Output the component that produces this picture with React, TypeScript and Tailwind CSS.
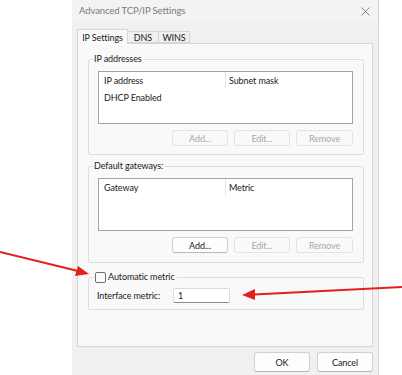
import React from "react";

const font = { fontFamily: 'Lato, "Noto Sans", sans-serif' };

function Btn({ label, disabled, className = "" }: { label: string; disabled?: boolean; className?: string }) {
  return (
    <div
      className={
        "flex items-center justify-center rounded-[3px] border text-[9px] leading-none " +
        (disabled
          ? "border-[#e3e3e3] bg-[#f9f9f9] text-[#a8a8a8] "
          : "border-[#d0d0d0] border-b-[#b8b8b8] bg-[#fdfdfd] text-[#1a1a1a] ") +
        className
      }
    >
      {label}
    </div>
  );
}

function ListView({ c1, c2, row }: { c1: string; c2: string; row?: string }) {
  return (
    <div className="ml-[9px] w-[255px] h-[53px] border border-[#a3a3a3] bg-white text-[9px] text-[#1a1a1a] leading-none">
      <div className="flex h-[17px] items-center">
        <div className="w-[127px] h-full flex items-center pl-[5px] border-r border-[#e5e5e5]">{c1}</div>
        <div className="pl-[3px]">{c2}</div>
      </div>
      {row && <div className="pl-[5px] pt-[4px]">{row}</div>}
    </div>
  );
}

function Group({ label, h, children, className = "" }: { label: React.ReactNode; h: string; children: React.ReactNode; className?: string }) {
  return (
    <div className={"relative ml-[10px] w-[276px] border border-[#dedede] rounded-[2px] " + h + " " + className}>
      <div className="absolute left-[5px] top-[-7px] bg-[#f9f9f9] pr-[2px] text-[9px] leading-[12px] text-[#1a1a1a]">{label}</div>
      {children}
    </div>
  );
}

export default function App() {
  return (
    <div className="relative w-[402px] h-[375px] bg-white overflow-hidden tracking-[-0.1px]" style={font}>
      <div className="ml-[72px] w-[307px] h-[375px] bg-[#f0f0f0] border-r border-[#d8d8d8] flex flex-col">
        {/* title bar */}
        <div className="h-[22px] flex items-center justify-between bg-[#f3f3f3] pl-[7px] pr-[8px]">
          <span className="text-[9.5px] text-[#7c7c7c]">Advanced TCP/IP Settings</span>
          <svg width="9" height="9" viewBox="0 0 9 9">
            <path d="M0.5 0.5 L8.5 8.5 M8.5 0.5 L0.5 8.5" stroke="#8a8a8a" strokeWidth="1" />
          </svg>
        </div>
        {/* tabs */}
        <div className="mt-[7px] ml-[5px] flex items-end h-[14px] text-[9px] leading-none text-[#1a1a1a]">
          <div className="h-[15px] w-[51px] mb-[-1px] relative z-10 flex items-center justify-center border border-b-0 border-[#d6d6d6] bg-[#f9f9f9]">IP Settings</div>
          <div className="h-[12px] w-[31px] flex items-center justify-center border border-l-0 border-[#d6d6d6] bg-[#f0f0f0]">DNS</div>
          <div className="h-[12px] w-[31px] flex items-center justify-center border border-l-0 border-[#d6d6d6] bg-[#f0f0f0]">WINS</div>
        </div>
        {/* panel */}
        <div className="ml-[5px] w-[296px] h-[304px] border border-[#d6d6d6] bg-[#f9f9f9] flex flex-col">
          <Group label="IP addresses" h="h-[96px]" className="mt-[15px]">
            <div className="pt-[11px]">
              <ListView c1="IP address" c2="Subnet mask" row="DHCP Enabled" />
              <div className="flex justify-end gap-[6px] pr-[10px] mt-[6px]">
                <Btn label="Add..." disabled className="w-[56px] h-[16px]" />
                <Btn label="Edit..." disabled className="w-[56px] h-[16px]" />
                <Btn label="Remove" disabled className="w-[57px] h-[16px]" />
              </div>
            </div>
          </Group>
          <Group label="Default gateways:" h="h-[97px]" className="mt-[11px]">
            <div className="pt-[11px]">
              <ListView c1="Gateway" c2="Metric" />
              <div className="flex justify-end gap-[6px] pr-[10px] mt-[6px]">
                <Btn label="Add..." className="w-[56px] h-[16px]" />
                <Btn label="Edit..." disabled className="w-[56px] h-[16px]" />
                <Btn label="Remove" disabled className="w-[57px] h-[16px]" />
              </div>
            </div>
          </Group>
          <Group
            label={
              <div className="flex items-center gap-[2px] pl-[1px]">
                <div className="w-[11px] h-[11px] rounded-[2px] border border-[#6e6e6e] bg-[#f9f9f9]" />
                <span>Automatic metric</span>
              </div>
            }
            h="h-[33px]"
            className="mt-[14px]"
          >
            <div className="flex items-center pt-[10px] pl-[8px] text-[9px] leading-none text-[#1a1a1a]">
              <span className="w-[76px]">Interface metric:</span>
              <div className="w-[57px] h-[15px] border border-[#dcdcdc] border-b-[#8a8a8a] bg-white flex items-center pl-[4px] rounded-[2px]">1</div>
            </div>
          </Group>
        </div>
        {/* footer */}
        <div className="flex justify-end gap-[7px] pr-[5px] mt-[5px]">
          <Btn label="OK" className="w-[56px] h-[20px]" />
          <Btn label="Cancel" className="w-[56px] h-[20px]" />
        </div>
      </div>
      {/* annotation arrows */}
      <svg className="absolute left-0 top-0 pointer-events-none" width="402" height="375" viewBox="0 0 402 375">
        <line x1="0" y1="252" x2="78" y2="271" stroke="#e3201b" strokeWidth="2" />
        <polygon points="89,274 75,276 78,266" fill="#e3201b" />
        <line x1="402" y1="287" x2="254" y2="294.5" stroke="#e3201b" strokeWidth="2" />
        <polygon points="242,295 255,289 255,300" fill="#e3201b" />
      </svg>
    </div>
  );
}
